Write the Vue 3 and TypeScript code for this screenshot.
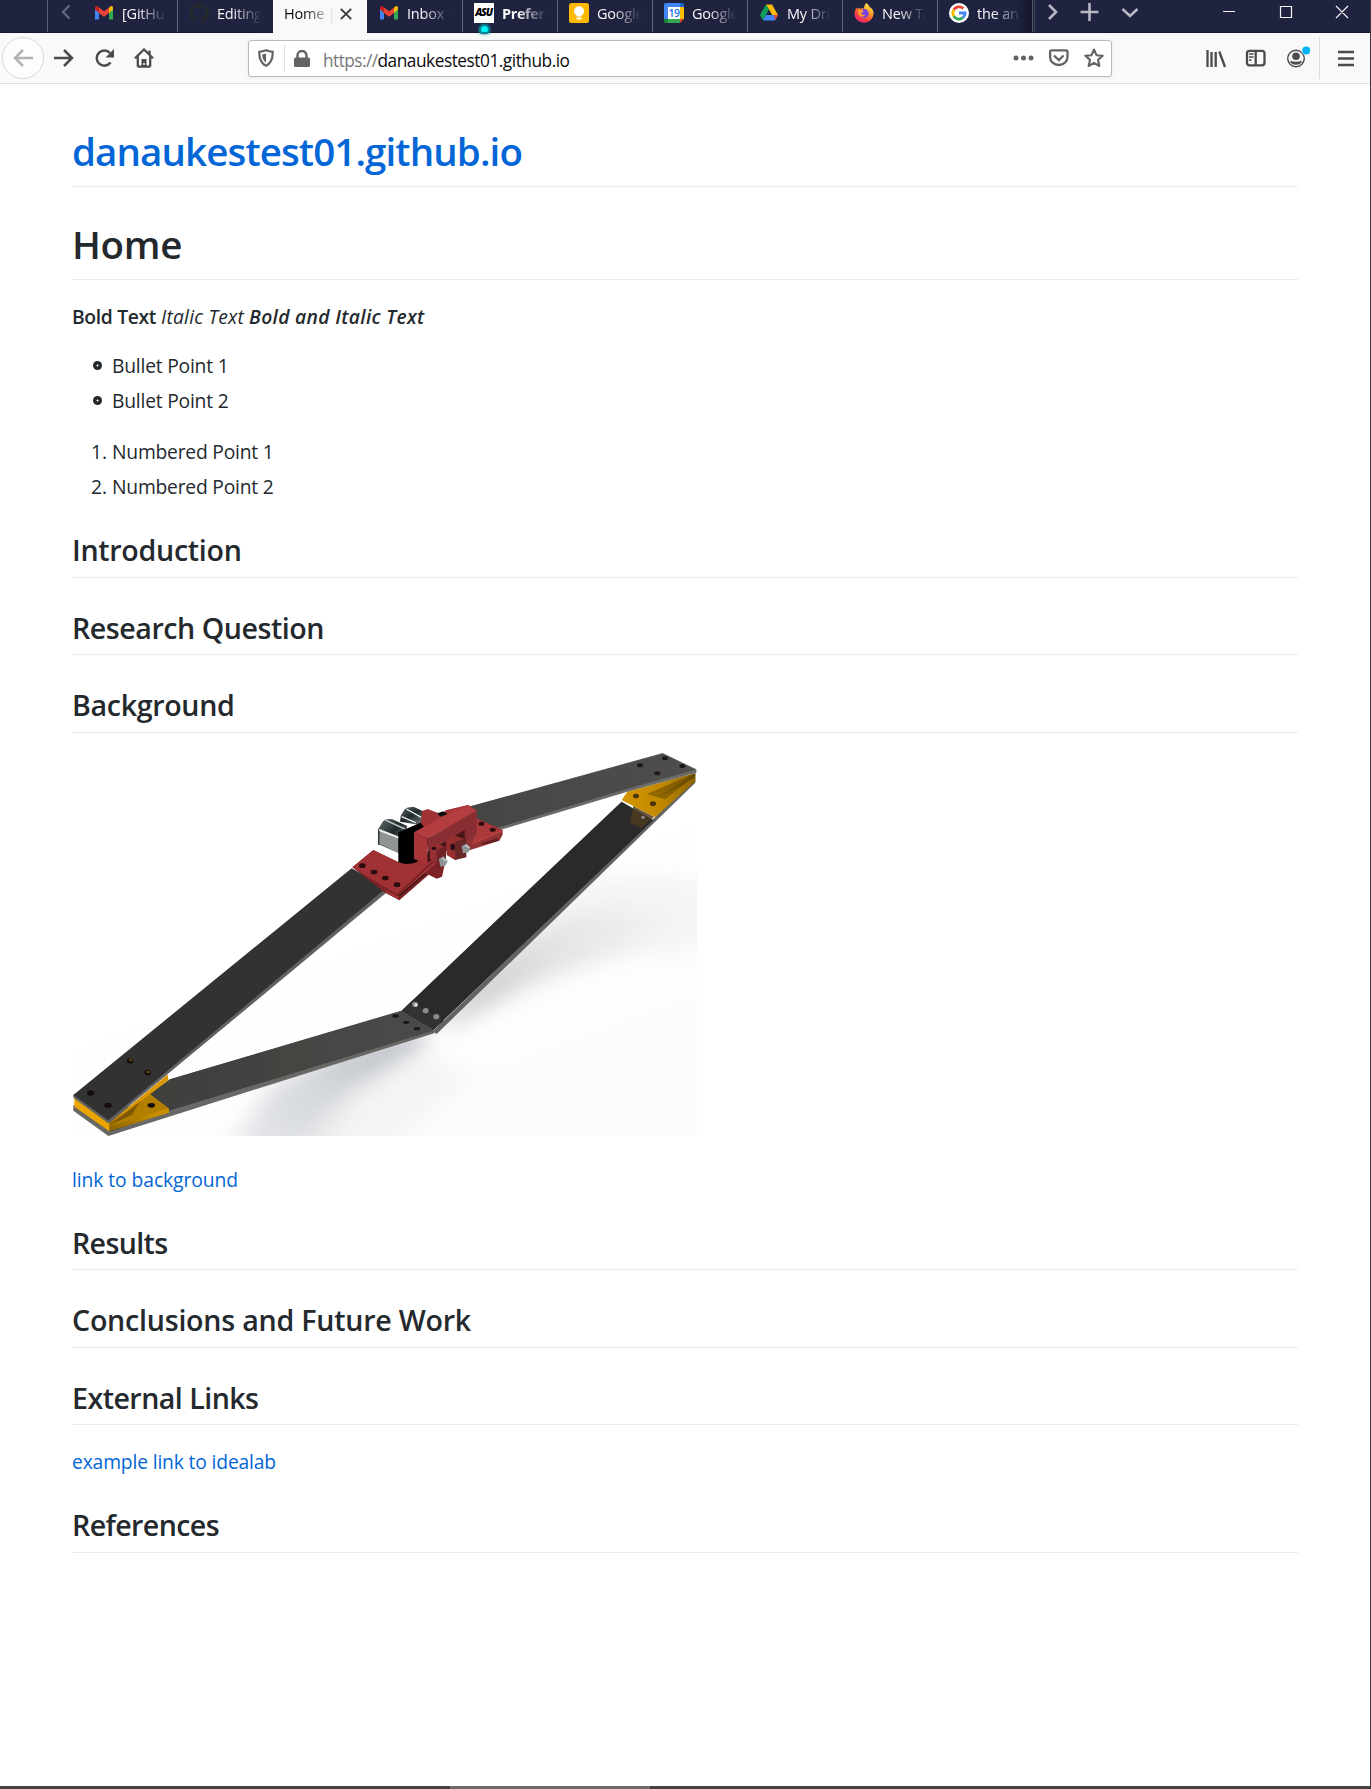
<script setup lang="ts">
import type { Directive } from 'vue'

interface Tab { icon: string; label: string; bold?: boolean; active?: boolean; dot?: boolean }

const tabs: Tab[] = [
  { icon: 'gmail', label: '[GitHu' },
  { icon: 'github', label: 'Editing' },
  { icon: '', label: 'Home |', active: true },
  { icon: 'gmail', label: 'Inbox -' },
  { icon: 'asu', label: 'Prefer', bold: true, dot: true },
  { icon: 'keep', label: 'Google' },
  { icon: 'calendar', label: 'Google' },
  { icon: 'drive', label: 'My Dri' },
  { icon: 'firefox', label: 'New Ta' },
  { icon: 'google', label: 'the ans' },
]

// Tracks a run of text so that it takes the given width in pixels.
const vFit: Directive<HTMLElement, number> = {
  mounted(el, { value }) {
    const count = (el.textContent ?? '').length
    const range = document.createRange()
    range.selectNodeContents(el)
    const width = range.getBoundingClientRect().width
    el.style.letterSpacing = `${(value - width) / count}px`
  },
}
</script>

<template>
  <div class="window">
    <header class="tabstrip">
      <div class="scroll-left">
        <svg width="12" height="16" viewBox="0 0 12 16"><path d="M9.500 1.500 3 8l6.500 6.500" fill="none" stroke="#62647b" stroke-width="2.400" /></svg>
      </div>
      <div v-for="(tab, i) in tabs" :key="i" class="tab" :class="{ active: tab.active, first: i === 0, second: i === 1, last: i === 9 }">
        <span v-if="tab.icon" class="favicon">
          <svg v-if="tab.icon === 'gmail'" width="20" height="20" viewBox="0 0 20 20">
            <path d="M1 5v11.500h4V9z" fill="#4285f4" /><path d="M19 5v11.500h-4V9z" fill="#34a853" />
            <path d="M15 4.500 17 3q2-.5 2 2v1.500L15 10z" fill="#fbbc04" /><path d="M1 6.500V5q0-2.500 2-2l2 1.500V10z" fill="#c5221f" />
            <path d="M5 4.500 10 8.300l5-3.800V10l-5 3.800L5 10z" fill="#ea4335" />
          </svg>
          <svg v-else-if="tab.icon === 'github'" width="20" height="20" viewBox="0 0 16 16">
            <path fill="#24292e" d="M8 0C3.580 0 0 3.580 0 8c0 3.540 2.290 6.530 5.470 7.590.4.070.55-.17.55-.38 0-.19-.01-.82-.01-1.490-2.010.37-2.530-.49-2.690-.94-.09-.23-.48-.94-.82-1.130-.28-.15-.68-.52-.01-.53.63-.01 1.080.58 1.230.82.72 1.210 1.870.87 2.330.66.070-.52.28-.87.51-1.070-1.780-.2-3.640-.89-3.640-3.950 0-.87.31-1.590.82-2.150-.08-.2-.36-1.020.08-2.120 0 0 .67-.21 2.200.82a7.600 7.600 0 0 1 4 0c1.530-1.040 2.200-.82 2.200-.82.44 1.100.16 1.920.08 2.120.51.560.82 1.270.82 2.150 0 3.070-1.870 3.750-3.650 3.950.29.25.54.73.54 1.480 0 1.070-.01 1.930-.01 2.200 0 .21.15.46.55.38A8 8 0 0 0 16 8c0-4.420-3.580-8-8-8z" />
          </svg>
          <span v-else-if="tab.icon === 'asu'" class="asu">ASU</span>
          <svg v-else-if="tab.icon === 'keep'" width="20" height="20" viewBox="0 0 20 20">
            <rect width="20" height="20" rx="2.500" fill="#ffba00" /><circle cx="10" cy="8.300" r="5" fill="#fff" /><path d="M7.500 11h5v2.500h-5zM7.500 14.500h5v2h-5z" fill="#fff" />
          </svg>
          <svg v-else-if="tab.icon === 'calendar'" width="20" height="20" viewBox="0 0 20 20">
            <path d="M1.500 0H16v4H4v12H0V1.500Q0 0 1.500 0z" fill="#4285f4" /><path d="M16 0h2.500Q20 0 20 1.500V4h-4z" fill="#1967d2" />
            <path d="M16 4h4v12h-4z" fill="#fbbc04" /><path d="M4 16h12v4H4z" fill="#34a853" /><path d="M0 16h4v4H1.500Q0 20 0 18.500z" fill="#188038" />
            <path d="M16 16h4l-4 4z" fill="#ea4335" /><path d="M4 4h12v12H4z" fill="#fff" />
            <text x="9.900" y="13.700" text-anchor="middle" font-size="10.500" font-weight="600" letter-spacing="-.5" fill="#1a73e8">19</text>
          </svg>
          <svg v-else-if="tab.icon === 'drive'" width="20" height="20" viewBox="0 0 20 20">
            <path d="M7 1.500h6L19 12h-6z" fill="#fbbc04" /><path d="M7 1.500 10 6.700 4 17.500 1 12z" fill="#0f9d58" /><path d="M7 12h12l-3 5.500H4z" fill="#4285f4" /><path d="m15 12h4l-3 5.500z" fill="#ea4335" /><path d="m10 6.700 3 5.300H7z" fill="#202340" />
          </svg>
          <svg v-else-if="tab.icon === 'firefox'" width="20" height="20" viewBox="0 0 20 20">
            <defs><linearGradient id="fox" x1=".8" y1="0" x2=".2" y2="1"><stop offset="0" stop-color="#fff44f" /><stop offset=".35" stop-color="#ffa52b" /><stop offset=".65" stop-color="#ff4a3d" /><stop offset="1" stop-color="#e3197c" /></linearGradient></defs>
            <path d="M12.500 0c2 1.500 2.500 3 3.500 4.500l1 .3c2 2 2.700 4 2.500 6.200-.5 5-4.500 8.700-9.500 8.700S.5 16 .5 11c0-2.500 1-5 2-6.500l1 1.500 2-1.500.5 1.500c2-1.500 4-.5 4-.5C10 3 11 1 12.500 0z" fill="url(#fox)" />
            <circle cx="10.300" cy="10.500" r="4.400" fill="#7542e5" /><path d="M4 8c2-2 4-1 5.500 0 .5 1-1.500 1.500-2.500 2 1 2 3 2 4.500 1.500-1 3-6 3-7 0z" fill="#ff9a2f" />
          </svg>
          <svg v-else width="20" height="20" viewBox="0 0 20 20">
            <circle cx="10" cy="10" r="10" fill="#fff" />
            <g fill="none" stroke-width="2.800"><path d="M14.300 5.600A6.100 6.100 0 0 0 4.800 6.800" stroke="#ea4335" /><path d="M4.800 6.800a6.100 6.100 0 0 0 0 6.400" stroke="#fbbc05" /><path d="M4.800 13.200a6.100 6.100 0 0 0 9.100 1.500" stroke="#34a853" /><path d="M13.900 14.700c1.500-1.200 2.200-2.800 2.200-4.700H10" stroke="#4285f4" /></g>
          </svg>
        </span>
        <span class="label" :class="{ bold: tab.bold }">{{ tab.label }}</span>
        <svg v-if="tab.active" class="close" width="12" height="12" viewBox="0 0 12 12"><path d="m.8.8 10.400 10.400M11.200.8.800 11.200" stroke="#3a3a3d" stroke-width="1.900" /></svg>
        <i v-if="tab.dot" class="dot"></i>
      </div>
      <div class="strip-end"></div>
      <svg class="strip-icons" width="335" height="32" viewBox="0 0 335 32">
        <g fill="none" stroke="#b7b8c4" stroke-width="2.600"><path d="m14 5 7 7-7 7M45.500 12h18M54.500 3v18M87.500 9l7.500 7 7.500-7" /></g>
        <g fill="none" stroke="#f2f2f5" stroke-width="1.200"><path d="M188 11.500h12M245.500 6.500h11v11h-11zM301 6l12 12M313 6l-12 12" /></g>
      </svg>
    </header>

    <nav class="toolbar">
      <span class="back"><svg width="20" height="18" viewBox="0 0 20 18"><path d="M20 9H2M10 1 2 9l8 8" fill="none" stroke="#b2b2b4" stroke-width="2.500" /></svg></span>
      <svg class="forward" width="20" height="18" viewBox="0 0 20 18"><path d="M0 9h18M10 1l8 8-8 8" fill="none" stroke="#4b4b4d" stroke-width="2.500" /></svg>
      <svg class="reload" width="20" height="20" viewBox="0 0 20 20"><path d="M15.500 14.500A7.600 7.600 0 1 1 15 5" fill="none" stroke="#4b4b4d" stroke-width="2.500" /><path d="M19 1v8.500h-8.500z" fill="#4b4b4d" /></svg>
      <svg class="home" width="20" height="20" viewBox="0 0 20 20"><path d="M1 10.300 10 1.500l9 8.800M3.800 8.500v9.200q0 1 1 1h10.400q1 0 1-1V8.500M15.500 2.500V7" fill="none" stroke="#4b4b4d" stroke-width="2.300" /><path d="M7.500 11h5v8h-5z" fill="#4b4b4d" /><path d="M9.200 15h1.600v2H9.200z" fill="#f9f9fa" /></svg>
      <div class="urlbar">
        <svg class="shield" width="16" height="18" viewBox="0 0 16 18"><path d="M8 1.300c2.200.9 4.400 1.400 6.700 1.500.2 6.500-1 11.200-6.700 13.900C2.300 14 1.100 9.300 1.300 2.800 3.600 2.700 5.800 2.200 8 1.300z" fill="none" stroke="#636365" stroke-width="2.200" /><path d="M8 4.500v9c-3-2-3.800-4.500-3.800-8z" fill="#636365" /></svg>
        <i class="rule"></i>
        <svg class="lock" width="16" height="17" viewBox="0 0 16 17"><rect y="7.500" width="16" height="9.500" rx="1.500" fill="#636365" /><path d="M3.500 8V5.500a4.500 4.500 0 0 1 9 0V8" fill="none" stroke="#636365" stroke-width="2.400" /></svg>
        <span class="url"><span v-fit="54.500" class="scheme">https://</span><span v-fit="192">danaukestest01.github.io</span></span>
        <svg class="page-actions" width="92" height="20" viewBox="0 0 92 20">
          <g fill="#636365"><circle cx="3" cy="10" r="2.500" /><circle cx="10.500" cy="10" r="2.500" /><circle cx="18" cy="10" r="2.500" /></g>
          <g fill="none" stroke="#636365" stroke-width="2.300"><path d="M38.500 2.300h14.500q1.500 0 1.500 1.500V9a8.700 8 0 0 1-17.400 0V3.800q0-1.500 1.400-1.500z" /><path d="m41 7.500 4.800 4.600 4.800-4.600" /><path stroke-linejoin="round" stroke-width="2.100" d="m81 1.500 2.500 5.700 6.200.6-4.700 4.100 1.400 6.100L81 14.800 75.600 18l1.400-6.100-4.700-4.100 6.200-.6z" /></g>
        </svg>
      </div>
      <svg class="tools" width="110" height="26" viewBox="0 0 110 26">
        <g stroke="#4b4b4d" stroke-width="2.300" fill="none">
          <path d="M1.500 5v17M5.500 7v15M9.700 7v15M13.300 6.500 19 22" />
          <rect x="41" y="5.800" width="17.500" height="14.500" rx="2.500" /><path d="M49.700 6v14" /><path d="M43 9h4.500M43 12h4.500M43 15h2.500" stroke-width="1.300" />
          <circle cx="90" cy="13.500" r="8.300" stroke-width="1.400" />
        </g>
        <circle cx="90" cy="11.200" r="3.800" fill="#4b4b4d" /><path d="M84 15.700q6 2.200 12 0-1 4-6 4t-6-4z" fill="#4b4b4d" />
        <circle cx="100" cy="5.500" r="4.500" fill="#fff" /><circle cx="100.200" cy="5.500" r="4" fill="#00b3f4" />
      </svg>
      <i class="tool-rule"></i>
      <svg class="menu" width="16" height="17" viewBox="0 0 16 17"><path d="M0 2h16M0 8.500h16M0 15h16" stroke="#4b4b4d" stroke-width="2.400" /></svg>
    </nav>

    <main class="page">
      <h1><a href="#"><span v-fit="450">danaukestest01.github.io</span></a></h1>
      <h1><span v-fit="110">Home</span></h1>
      <p><strong v-fit="84">Bold Text</strong> <em v-fit="83">Italic Text</em> <strong v-fit="175.500"><em>Bold and Italic Text</em></strong></p>
      <ul>
        <li><i class="bullet"></i><span v-fit="116.500">Bullet Point 1</span></li>
        <li><i class="bullet"></i><span v-fit="116.500">Bullet Point 2</span></li>
      </ul>
      <ol>
        <li><span v-fit="161.500">Numbered Point 1</span></li>
        <li><span v-fit="161.500">Numbered Point 2</span></li>
      </ol>
      <h2><span v-fit="169.500">Introduction</span></h2>
      <h2><span v-fit="252">Research Question</span></h2>
      <h2><span v-fit="162.500">Background</span></h2>
      <div class="figure">
        <svg width="625" height="383" viewBox="-804 39 1875 1149" role="img">
          <defs>
            <filter id="soft" x="-50%" y="-50%" width="200%" height="200%"><feGaussianBlur stdDeviation="32" /></filter>
            <filter id="smooth" x="-20%" y="-20%" width="140%" height="140%"><feGaussianBlur stdDeviation="1.500" /></filter>
            <linearGradient id="floor" x1="0" y1="0" x2=".6" y2="1"><stop offset=".55" stop-color="#fff" /><stop offset="1" stop-color="#fcfcfc" /></linearGradient>
            <linearGradient id="shadeR" gradientUnits="userSpaceOnUse" x1="380" y1="760" x2="1069" y2="560"><stop offset="0" stop-color="#b8b6b4" /><stop offset=".4" stop-color="#dededd" /><stop offset="1" stop-color="#f5f5f5" /></linearGradient>
            <linearGradient id="shadeL" gradientUnits="userSpaceOnUse" x1="180" y1="900" x2="-330" y2="1200"><stop offset="0" stop-color="#9ba0aa" /><stop offset=".5" stop-color="#c4c8ce" /><stop offset="1" stop-color="#dfe1e5" /></linearGradient>
            <linearGradient id="beamTop" x1="0" y1="0" x2="1" y2="0"><stop offset="0" stop-color="#444443" /><stop offset="1" stop-color="#514f4d" /></linearGradient>
            <linearGradient id="beamLow" x1="0" y1="0" x2="1" y2="0"><stop offset="0" stop-color="#3d3d3c" /><stop offset="1" stop-color="#4a4a48" /></linearGradient>
            <linearGradient id="amberL" x1="0" y1="1" x2="1" y2="0"><stop offset="0" stop-color="#8b6200" /><stop offset=".5" stop-color="#c48a00" /><stop offset="1" stop-color="#dd9a00" /></linearGradient>
            <linearGradient id="amberR" x1="0" y1="0" x2="1" y2="0"><stop offset="0" stop-color="#d59600" /><stop offset=".55" stop-color="#c08800" /><stop offset="1" stop-color="#8b6200" /></linearGradient>
            <linearGradient id="steel" x1="0" y1="0" x2="1" y2="1"><stop offset="0" stop-color="#666e70" /><stop offset=".45" stop-color="#20282a" /><stop offset="1" stop-color="#879092" /></linearGradient>
          </defs>
          <rect x="-804" y="39" width="1875" height="1149" fill="url(#floor)" />
          <path d="M500 560 760 400 1120 420V620L780 660 560 700z" fill="#efefef" opacity=".6" filter="url(#soft)" />
          <path d="M290 860 480 650 700 520 900 510 1000 560 760 660 560 740 360 840z" fill="url(#shadeR)" opacity=".75" filter="url(#soft)" />
          <path d="M270 870 0 930-200 1030-340 1240-60 1240 40 1080 240 930z" fill="url(#shadeL)" opacity=".7" filter="url(#soft)" />
          <path d="M230 930 0 1060-150 1230H150L400 1010z" fill="#f0f0f0" opacity=".6" filter="url(#soft)" />
          <g filter="url(#smooth)">
            <path d="M-510 1018 185 812 280 870 285 879 0 968-695 1188-800 1112V1095L-600 1100z" fill="#686866" />
            <path d="M-570 1060-510 1018 185 812 280 872 0 957-515 1113-690 1175z" fill="url(#beamLow)" />
            <path d="M845 185 185 812 280 872 945 232 1066 112v16L290 882 278 873z" fill="#646463" />
            <path d="M845 185 185 812 280 870 940 240z" fill="#292a2a" />
            <path d="M185 812 213 785 312 842 280 870z" fill="#303131" />
            <path d="m880 198 62 32-38 35-35-17z" fill="#4b3c20" opacity=".85" />
            <path d="m862 155 204-56v25L945 232 845 180z" fill="url(#amberR)" />
            <path d="m920 162 146-62v8L975 178z" fill="#604300" opacity=".5" />
            <path d="M1066 100v12L950 175z" fill="#4d3600" opacity=".4" />
            <path d="M370 205 968 39 1069 88V98L862 155 470 273 380 290z" fill="#6b6a68" />
            <path d="M370 205 968 41 1067 89 862 146 470 264 380 285z" fill="url(#beamTop)" />
            <g transform="translate(-840)">
              <path d="m148 1150 175-146 2 16-55 43 57 43v12l-179 56z" fill="url(#amberL)" />
              <path d="m150 1158 118-92 57 39-173 52z" fill="#b27e00" />
              <path d="M152 1155 240 1085 215 1125z" fill="#5c4100" opacity=".6" />
              <path d="m148 1150 175-146 2 16-58 44z" fill="#db9800" />
              <path d="m43 1075 105 72v27L43 1100z" fill="#eba400" />
              <path d="m40 1063 105 76 832-695v16L145 1150 40 1073z" fill="#626261" />
              <path d="M40 1065 875 385 980 443 145 1141z" fill="#303030" />
              <g fill="#15110a"><ellipse cx="92" cy="1059" rx="11" ry="8" /><ellipse cx="144" cy="1096" rx="11" ry="8" /><ellipse cx="210" cy="963" rx="10" ry="8" /><ellipse cx="263" cy="998" rx="10" ry="8" /><ellipse cx="274" cy="1096" rx="11" ry="7" /></g>
              <g fill="#5c4310"><ellipse cx="212" cy="960" rx="5" ry="4" /><ellipse cx="265" cy="996" rx="6" ry="4" /></g>
            </g>
            <g fill="#1a1918"><ellipse cx="900" cy="76" rx="9" ry="6" /><ellipse cx="975" cy="55" rx="9" ry="6" /><ellipse cx="1027" cy="78" rx="9" ry="6" /><ellipse cx="952" cy="100" rx="9" ry="6" /><ellipse cx="167" cy="828" rx="10" ry="5" /><ellipse cx="199" cy="847" rx="10" ry="5" /><ellipse cx="231" cy="866" rx="10" ry="5" /></g>
            <g fill="#4a3408"><ellipse cx="888" cy="168" rx="9" ry="7" /><ellipse cx="939" cy="191" rx="9" ry="7" /></g>
            <g fill="#8b8b89"><ellipse cx="225" cy="793" rx="9" ry="8" /><ellipse cx="257" cy="812" rx="9" ry="8" /><ellipse cx="289" cy="830" rx="9" ry="8" /><circle cx="909" cy="232" r="5" /></g>
            <circle cx="228" cy="795" r="5" fill="#e6e6e6" />

            <g transform="translate(0 120)">
              <path d="m182 108 12-20q10-9 28-7l38 18-20 36-60-10z" fill="url(#steel)" />
              <path d="m185 110 42 18M199 87l45 25" stroke="#e6eeee" stroke-width="4" />
              <path d="m114 148 15-24q10-9 28-6l45 20-25 82-62-28z" fill="url(#steel)" />
              <path d="m119 151 56 23v44l-58-27z" fill="#8f9591" />
              <path d="m117 150 60 23" stroke="#eff4f4" stroke-width="6" /><path d="m137 121 58 26" stroke="#b3c0c1" stroke-width="5" /><path d="M116 150v45" stroke="#303839" stroke-width="4" />
              <path d="M37 262 100 210 183 251 270 220 315 250 306 290 290 296 266 284 178 361 135 338z" fill="#7d2427" />
              <path d="M37 262 100 210 183 250 225 240 272 226 290 230 170 343z" fill="#a03134" />
              <path d="m138 334 34 18L282 250" fill="none" stroke="#b33b3e" stroke-width="4" /><path d="m176 349 80-68" stroke="#4b1719" stroke-width="6" />
              <path d="m315 92 70-17 25 18v22l78 35v14l-10 18-85 27-60 10z" fill="#923033" />
              <path d="m410 117 78 35-92 38 10-30z" fill="#ab373a" /><path d="m488 152-92 39" stroke="#c4484b" stroke-width="3" /><path d="m425 190 50-16v8l-50 12z" fill="#5a1b1d" />
              <path d="M175 157 255 122 280 118 262 200 230 247q-30 10-55 0z" fill="#050505" />
              <path d="m246 93 17-6 57 22-42 28-15 18-20-25z" fill="#a03336" />
              <path d="m285 115 35-25 65-15v10l-95 45z" fill="#a83639" />
              <path d="m292 100 18-6 14 9-24 7z" fill="#111" />
              <path d="m222 157 95-52 68-30 26 17-149 85z" fill="#b33c3f" />
              <path d="m222 157 40 20v73l-40-13z" fill="#a93538" />
              <path d="m262 176 148-84v72l-34 18v-32l-114 66z" fill="#882d30" />
              <path d="m262 215 112-65v30l-112 68z" fill="#461719" />
              <path d="m270 202 20-12 28 13v30l-28 18-20-14z" fill="#972f32" /><path d="m290 211 28-14v54l-28 18z" fill="#6f2326" />
              <path d="m318 180 22-14 37 12v48l-32 14-25-15z" fill="#972f32" /><path d="m345 186 34-14v60l-34 8z" fill="#6b2528" />
              <g fill="#241012"><ellipse cx="338" cy="201" rx="7" ry="10" /><ellipse cx="282" cy="205" rx="8" ry="5" /></g>
              <path d="m365 198 15-7 11 12-5 14-17 3z" fill="#8f9497" /><path d="m296 237 15-8 12 14-5 12-16 6z" fill="#8f9497" /><path d="m375 195 13 8M306 234l13 9" stroke="#d0d3d3" stroke-width="4" />
              <g fill="#2a0c0d"><ellipse cx="67" cy="257" rx="10" ry="7" /><ellipse cx="102" cy="276" rx="10" ry="7" /><ellipse cx="136" cy="294" rx="10" ry="7" /><ellipse cx="171" cy="314" rx="10" ry="7" /><ellipse cx="424" cy="131" rx="9" ry="6" /><ellipse cx="458" cy="149" rx="9" ry="6" /></g>
            </g>
          </g>
        </svg>
      </div>
      <p><a href="#"><span v-fit="166">link to background</span></a></p>
      <h2><span v-fit="95.500">Results</span></h2>
      <h2><span v-fit="399">Conclusions and Future Work</span></h2>
      <h2><span v-fit="186.500">External Links</span></h2>
      <p><a href="#"><span v-fit="204">example link to idealab</span></a></p>
      <h2><span v-fit="147">References</span></h2>
    </main>
    <footer class="taskbar"><i></i></footer>
  </div>
</template>

<style>
html, body { margin: 0; background: #fff; }
</style>

<style scoped>
.window { width: 1371px; height: 1789px; box-sizing: border-box; display: flex; flex-direction: column; overflow: hidden; background: #fff; border-right: 1px solid #39393c; font-family: "Open Sans", "Noto Sans", sans-serif; color: #24292e; }
.window * { box-sizing: border-box; }
svg { display: block; flex: none; }
.tabstrip { height: 33px; flex: none; display: flex; background: #202340; border-bottom: 1px solid #15172f; }
.scroll-left { width: 36px; margin-left: 47px; border-left: 1px solid #5b5d74; padding: 4px 0 0 12px; flex: none; }
.tab { position: relative; width: 95px; height: 32px; flex: none; display: flex; align-items: flex-start; padding: 3px 0 0 11px; border-left: 1px solid #64667b; color: #f9f9fa; font-size: 14.500px; }
.tab.first { border-left: 0; width: 94px; }
.tab.second { width: 96px; }
.tab.active { width: 94px; height: 33px; background: #f9f9fa; color: #0c0c0d; border: 0; padding-left: 11px; }
.tab.active + .tab { border-left-color: #202340; }
.favicon { width: 20px; height: 20px; margin-right: 8px; flex: none; }
.label { width: 45px; height: 22px; line-height: 22px; overflow: hidden; white-space: nowrap; letter-spacing: -.2px; -webkit-mask-image: linear-gradient(90deg, #000 35%, transparent 98%); mask-image: linear-gradient(90deg, #000 35%, transparent 98%); }
.label.bold { font-weight: 700; letter-spacing: -.4px; }
.active .label { width: 50px; -webkit-mask-image: linear-gradient(90deg, #000 40%, rgba(0, 0, 0, .12) 95%); mask-image: linear-gradient(90deg, #000 40%, rgba(0, 0, 0, .12) 95%); }
.close { margin: 5px 0 0 6px; }
.asu { display: block; width: 20px; height: 20px; background: #fff; color: #000; font: italic 800 10.500px/19px "Open Sans", sans-serif; letter-spacing: -1.200px; text-indent: -1px; text-align: center; white-space: nowrap; }
.dot { position: absolute; left: 18px; bottom: 0; width: 7px; height: 6px; border-radius: 4px 4px 2px 2px; background: #00f0f5; box-shadow: 0 0 0 2px #087f91, 0 0 3px 2px #087f91; }
.tab.last { background: linear-gradient(90deg, transparent 82%, #15172c); }
.strip-end { width: 3px; height: 32px; border-left: 1px solid #55576b; border-right: 1px solid #44465c; flex: none; }
.toolbar { height: 51px; flex: none; display: flex; align-items: center; background: #f9f9fa; border-bottom: 1px solid #dededf; }
.back { width: 42px; height: 42px; margin-left: 2px; border: 1px solid #d9d9da; border-radius: 50%; background: #fdfdfd; display: flex; align-items: center; justify-content: center; flex: none; }
.forward { margin-left: 10px; }
.reload { margin-left: 21px; }
.home { margin-left: 19px; }
.urlbar { width: 864px; height: 37px; margin-left: 94px; display: flex; align-items: center; background: #fff; border: 1px solid #b9b9ba; border-radius: 3px; box-shadow: 0 1px 4px rgba(0, 0, 0, .06); flex: none; }
.shield { margin-left: 9px; }
.rule { width: 1px; height: 26px; margin: 0 9px 0 10px; background: #ddd; }
.url { margin: 4px auto 0 13px; font-size: 17.300px; color: #0c0c0d; white-space: nowrap; }
.scheme { color: #77777a; }
.page-actions { margin-right: 6px; }
.tools { margin-left: 94px; }
.tool-rule { width: 1px; height: 42px; margin-left: 3px; background: #dcdcdd; }
.menu { margin-left: 18px; }
.page { flex: 1; padding: 40px 72px 0 72px; font-size: 19.300px; }
h1, h2, p, ul, ol { margin: 0; }
h1, h2 { font-weight: 600; white-space: nowrap; border-bottom: 1px solid #eaecef; }
h1 { height: 63px; font-size: 38.500px; line-height: 54px; margin-bottom: 30px; }
h1 + p { margin-top: -10px; }
h2 { height: 47.500px; font-size: 28.600px; line-height: 39px; margin: 30px 0 0; }
p { height: 30px; line-height: 33.500px; margin-bottom: 20px; white-space: nowrap; }
h2 + p { margin-top: 20px; }
strong { font-weight: 600; }
a { color: #0366d6; text-decoration: none; }
ul, ol { padding-left: 40px; margin-bottom: 20px; }
ul { list-style: none; }
ul li { display: flex; align-items: center; margin-left: -19px; line-height: 34px; }
.bullet { width: 9px; height: 9px; margin-right: 10px; border-radius: 50%; background: radial-gradient(circle, #fff 0 .7px, #24292e 1.300px); }
li { height: 30px; line-height: 34px; }
ul li span { padding-top: 2px; }
li + li { margin-top: 5px; }
.figure { height: 390px; margin: 20px 0; }
.taskbar { height: 3px; margin-right: -1px; background: #444243; flex: none; padding-left: 450px; }
.taskbar i { display: block; width: 200px; height: 3px; background: #6c6a6b; }
</style>
